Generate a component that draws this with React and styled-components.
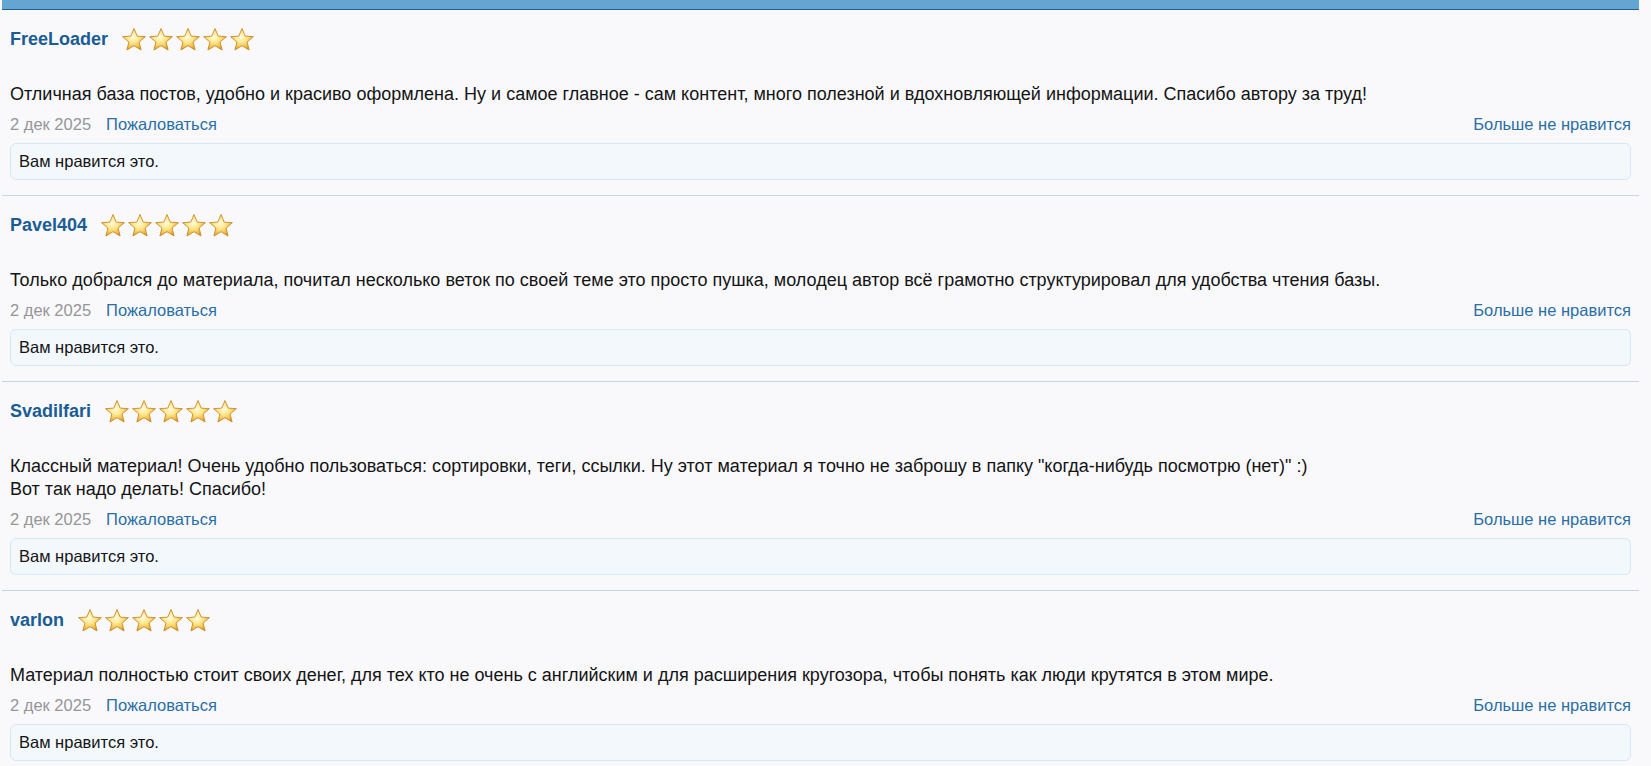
import React from "react";
import styled, { createGlobalStyle } from "styled-components";

const GlobalStyle = createGlobalStyle`
  html, body {
    margin: 0;
    padding: 0;
    background: #f9f9fc;
  }
  body {
    font-family: "Liberation Sans", Arial, sans-serif;
    color: #141414;
  }
`;

const Page = styled.div`
  padding: 0 12px 0 2px;
`;

const TopBar = styled.div`
  height: 9px;
  background: #65a5d1;
  border-bottom: 1px solid #1e6196;
`;

const ReviewList = styled.ol`
  list-style: none;
  margin: 0;
  padding: 0;
`;

const Review = styled.li`
  padding: 17px 8px 15px 8px;
  border-bottom: 1px solid #c8d4e2;
`;

const Header = styled.div`
  display: flex;
  align-items: center;
  gap: 13px;
  height: 24px;
`;

const Author = styled.a`
  font-weight: bold;
  font-size: 18px;
  color: #1a5c95;
  text-decoration: none;
`;

const Stars = styled.span`
  display: inline-flex;
  gap: 1px;
`;

const Body = styled.div`
  margin-top: 32px;
  font-size: 18px;
  line-height: 23px;
`;

const Meta = styled.div`
  display: flex;
  align-items: center;
  margin-top: 8px;
  font-size: 16.5px;
  line-height: 20px;
`;

const DateText = styled.span`
  color: #969696;
`;

const MetaLink = styled.a`
  color: #2a6ea6;
  text-decoration: none;
  margin-left: ${(p) => (p.$push ? "auto" : "15px")};
`;

const LikesBox = styled.div`
  margin-top: 9px;
  padding: 8px 8px;
  font-size: 16.5px;
  line-height: 19px;
  background: #f3f8fd;
  border: 1px solid #d6e7f5;
  border-radius: 6px;
`;

function Star({ id }) {
  return (
    <svg width="26" height="25" viewBox="0 0 26 25" aria-hidden="true">
      <defs>
        <radialGradient id={`g${id}`} cx="45%" cy="40%" r="60%">
          <stop offset="0%" stopColor="#fffbe0" />
          <stop offset="45%" stopColor="#fde68a" />
          <stop offset="85%" stopColor="#f1b73f" />
          <stop offset="100%" stopColor="#d98c1f" />
        </radialGradient>
      </defs>
      <path
        d="M13 1.5 L16.2 9.1 L24.4 9.7 L18.1 15 L20.1 23 L13 18.7 L5.9 23 L7.9 15 L1.6 9.7 L9.8 9.1 Z"
        fill={`url(#g${id})`}
        stroke="#c98a2a"
        strokeWidth="0.9"
        strokeLinejoin="round"
      />
    </svg>
  );
}

const reviews = [
  {
    name: "FreeLoader",
    text: [
      "Отличная база постов, удобно и красиво оформлена. Ну и самое главное - сам контент, много полезной и вдохновляющей информации. Спасибо автору за труд!",
    ],
  },
  {
    name: "Pavel404",
    text: [
      "Только добрался до материала, почитал несколько веток по своей теме это просто пушка, молодец автор всё грамотно структурировал для удобства чтения базы.",
    ],
  },
  {
    name: "Svadilfari",
    text: [
      'Классный материал! Очень удобно пользоваться: сортировки, теги, ссылки. Ну этот материал я точно не заброшу в папку "когда-нибудь посмотрю (нет)" :)',
      "Вот так надо делать! Спасибо!",
    ],
  },
  {
    name: "varlon",
    text: [
      "Материал полностью стоит своих денег, для тех кто не очень с английским и для расширения кругозора, чтобы понять как люди крутятся в этом мире.",
    ],
  },
];

export default function App() {
  return (
    <Page>
      <GlobalStyle />
      <TopBar />
      <ReviewList>
        {reviews.map((r, i) => (
          <Review key={r.name}>
            <Header>
              <Author href="#">{r.name}</Author>
              <Stars>
                {[0, 1, 2, 3, 4].map((s) => (
                  <Star key={s} id={`${i}-${s}`} />
                ))}
              </Stars>
            </Header>
            <Body>
              {r.text.map((line, k) => (
                <div key={k}>{line}</div>
              ))}
            </Body>
            <Meta>
              <DateText>2 дек 2025</DateText>
              <MetaLink href="#">Пожаловаться</MetaLink>
              <MetaLink href="#" $push>
                Больше не нравится
              </MetaLink>
            </Meta>
            <LikesBox>Вам нравится это.</LikesBox>
          </Review>
        ))}
      </ReviewList>
    </Page>
  );
}
